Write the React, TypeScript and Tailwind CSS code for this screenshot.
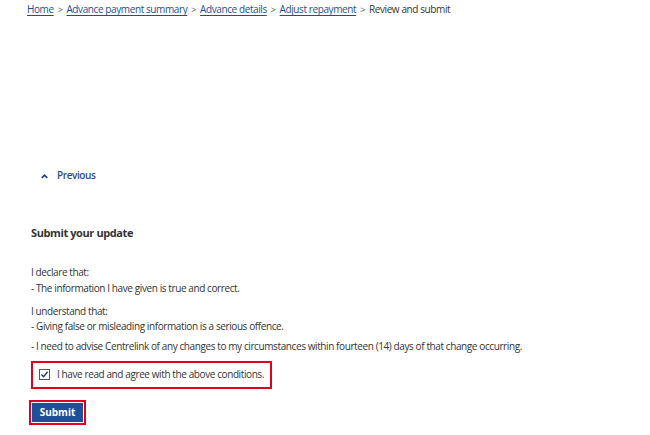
import { useState } from 'react';

const crumbs = ['Home', 'Advance payment summary', 'Advance details', 'Adjust repayment'];

export default function App() {
  const [agreed, setAgreed] = useState(true);

  return (
    <div
      className="min-h-[435px] w-[650px] bg-white text-[10px] tracking-[-0.4px] text-[#333333]"
      style={{ fontFamily: '"Open Sans", "Noto Sans", sans-serif' }}
    >
      {/* breadcrumb */}
      <nav className="flex items-center h-[18px] pl-[27px] pt-[1px]">
        {crumbs.map((c) => (
          <span key={c} className="flex items-center">
            <a href="#" className="text-[#1d4e96] underline underline-offset-2">
              {c}
            </a>
            <span className="mx-[4px] text-[#555] text-[9px]">&gt;</span>
          </span>
        ))}
        <span className="text-[#333]">Review and submit</span>
      </nav>

      <div className="h-[150px]" />

      <button className="flex items-center gap-[8px] pl-[40px] text-[#2a4a8f] font-semibold">
        <svg width="9" height="9" viewBox="0 0 10 10" className="mt-[1px]">
          <path d="M2 6.5 L5 3.5 L8 6.5" fill="none" stroke="#1d3f80" strokeWidth="1.8" />
        </svg>
        Previous
      </button>

      <div className="pl-[31px]">
        <h2 className="mt-[42px] text-[11px] font-bold text-[#333]">Submit your update</h2>

        <div className="mt-[22px] leading-[16px]">
          <p>I declare that:</p>
          <p>- The information I have given is true and correct.</p>
        </div>
        <div className="mt-[7px] leading-[16px]">
          <p>I understand that:</p>
          <p className="-mt-[1px]">- Giving false or misleading information is a serious offence.</p>
          <p className="mt-[4px]">
            - I need to advise Centrelink of any changes to my circumstances within fourteen (14) days of that change occurring.
          </p>
        </div>

        <label className="mt-[7px] flex items-center w-[241px] h-[28px] border-2 border-[#e4001b] pl-[6px] cursor-pointer">
          <span
            onClick={() => setAgreed(!agreed)}
            className="flex items-center justify-center w-[11px] h-[11px] border border-[#555] bg-white"
          >
            {agreed && (
              <svg width="9" height="9" viewBox="0 0 10 10">
                <path d="M1.5 5 L4 7.5 L8.5 2" fill="none" stroke="#1d3f80" strokeWidth="1.6" />
              </svg>
            )}
          </span>
          <span className="ml-[7px] whitespace-nowrap">I have read and agree with the above conditions.</span>
        </label>

        <div className="mt-[11px] ml-[-2px] inline-block border-2 border-[#e4001b] p-[1px]">
          <button className="block h-[19px] w-[51px] bg-[#1f4f97] text-white font-bold text-[10px] tracking-normal">
            Submit
          </button>
        </div>
      </div>
    </div>
  );
}
